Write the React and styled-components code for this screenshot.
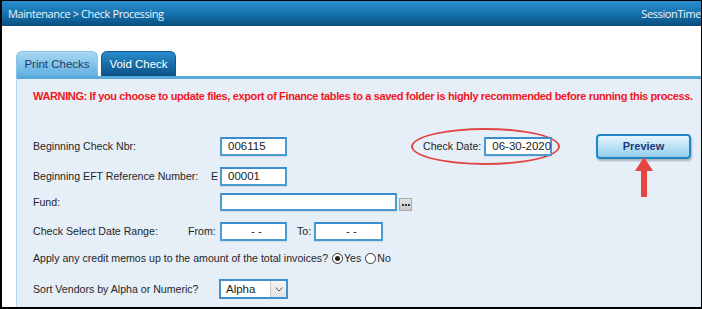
import React from "react";
import styled, { createGlobalStyle } from "styled-components";

const GlobalStyle = createGlobalStyle`
  html, body {
    margin: 0;
    padding: 0;
    background: #000;
  }
  body {
    font-family: "Liberation Sans", Arial, sans-serif;
  }
`;

const Frame = styled.div`
  width: 699px;
  height: 306px;
  border-top: 1px solid #000;
  border-left: 2px solid #000;
  border-right: 1px solid #000;
  border-bottom: 2px solid #000;
  background: #fff;
  overflow: hidden;
  display: flex;
  flex-direction: column;
`;

const Header = styled.div`
  height: 25px;
  flex: none;
  background: linear-gradient(#2a8fcf, #1470aa 55%, #0b4d7e);
  color: #eef4fa;
  font-family: "Open Sans", sans-serif;
  font-size: 11px;
  letter-spacing: -0.4px;
  display: flex;
  align-items: center;
  justify-content: space-between;
  padding: 0 0 0 6px;
  white-space: nowrap;
`;

const SessionTime = styled.span`
  margin-right: 0;
`;

const TabBar = styled.div`
  display: flex;
  gap: 3px;
  padding: 25px 0 0 14px;
  height: 25px;
`;

const Tab = styled.div`
  height: 25px;
  box-sizing: border-box;
  width: ${(p) => p.$w}px;
  border-radius: 6px 6px 0 0;
  display: flex;
  align-items: center;
  justify-content: center;
  font-size: 11.5px;
  color: ${(p) => (p.$active ? "#1d3e6c" : "#fff")};
  background: ${(p) =>
    p.$active
      ? "linear-gradient(#a9d8f3, #7cc0e8 60%, #62b0e0)"
      : "linear-gradient(#2b8dcc, #1569a3 60%, #0c5185)"};
  border: 1px solid ${(p) => (p.$active ? "#8cc4e6" : "#0f5a90")};
  border-bottom: none;
`;

const Panel = styled.div`
  flex: 1;
  margin-left: 14px;
  background: #e6eef8;
  border-top: 3px solid #5aaad9;
  border-left: 1px solid #b4d4ec;
  padding: 0 0 0 16px;
`;

const Warning = styled.div`
  color: #f2161e;
  font-weight: bold;
  font-size: 11px;
  letter-spacing: -0.37px;
  margin-top: 11px;
  white-space: nowrap;
`;

const Row = styled.div`
  display: flex;
  align-items: center;
  height: 22px;
  margin-top: ${(p) => p.$mt}px;
  font-size: 10.6px;
  color: #262626;
  white-space: nowrap;
`;

const Label = styled.span`
  box-sizing: border-box;
  width: ${(p) => p.$w}px;
  padding-left: ${(p) => p.$pl || 0}px;
  flex: none;
`;

const Field = styled.div`
  box-sizing: border-box;
  width: ${(p) => p.$w}px;
  height: ${(p) => p.$h || 19}px;
  border: 2px solid #4b9bd3;
  border-top-color: #3c8ccb;
  background: #fff;
  font-size: 11.5px;
  color: #1c1c1c;
  padding-left: 6px;
  display: flex;
  align-items: center;
  justify-content: ${(p) => (p.$center ? "center" : "flex-start")};
  flex: none;
  box-shadow: 0 1px 1px rgba(0, 0, 0, 0.08);
`;

const Ellipsis = styled.div`
  box-sizing: border-box;
  width: 13px;
  height: 13px;
  margin-left: 2px;
  background: linear-gradient(#e4e4e4, #c8c8c8);
  border: 1px solid #a8a8a8;
  display: flex;
  align-items: center;
  justify-content: center;
  gap: 1px;
  align-self: flex-end;
  margin-bottom: 2px;
`;

const Dot = styled.span`
  width: 2px;
  height: 2px;
  background: #333;
`;

const Oval = styled.div`
  margin-left: 124px;
  width: 149px;
  height: 37px;
  box-sizing: border-box;
  border: 2px solid #e14646;
  border-radius: 50%;
  display: flex;
  align-items: center;
  padding-left: 10px;
  gap: 3px;
  flex: none;
`;

const ButtonWrap = styled.div`
  position: relative;
  margin-left: 36px;
  flex: none;
`;

const PreviewButton = styled.div`
  width: 95px;
  height: 25px;
  box-sizing: border-box;
  border: 2px solid #1f87c6;
  border-radius: 4px;
  background: linear-gradient(#e6f4fd, #b8e0f6 55%, #95cdee);
  color: #1a3b78;
  font-weight: bold;
  font-size: 11px;
  display: flex;
  align-items: center;
  justify-content: center;
  box-shadow: 1px 2px 2px rgba(0, 0, 0, 0.25);
`;

const Arrow = styled.svg`
  position: absolute;
  left: 38px;
  top: 22px;
`;

const Radio = styled.span`
  display: inline-block;
  box-sizing: border-box;
  width: 11px;
  height: 11px;
  border-radius: 50%;
  border: 1px solid #333;
  background: #fff;
  margin: 0 1px 0 4px;
  position: relative;
  &::after {
    content: "";
    display: ${(p) => (p.$on ? "block" : "none")};
    position: absolute;
    left: 2px;
    top: 2px;
    width: 5px;
    height: 5px;
    border-radius: 50%;
    background: #222;
  }
`;

const Select = styled.div`
  box-sizing: border-box;
  width: 69px;
  height: 20px;
  border: 2px solid #3f92cf;
  background: #fff;
  display: flex;
  align-items: stretch;
  font-size: 11.5px;
  color: #1c1c1c;
`;

const SelectText = styled.span`
  flex: 1;
  display: flex;
  align-items: center;
  padding-left: 5px;
`;

const SelectArrow = styled.span`
  width: 15px;
  border-left: 1px solid #c8c8c8;
  background: linear-gradient(#f4f4f4, #e2e2e2);
  display: flex;
  align-items: center;
  justify-content: center;
`;

export default function App() {
  return (
    <>
      <GlobalStyle />
      <Frame>
        <Header>
          <span>Maintenance &gt; Check Processing</span>
          <SessionTime>SessionTime</SessionTime>
        </Header>
        <TabBar>
          <Tab $active $w={82}>Print Checks</Tab>
          <Tab $w={75}>Void Check</Tab>
        </TabBar>
        <Panel>
          <Warning>
            WARNING: If you choose to update files, export of Finance tables to a saved folder is highly recommended before running this process.
          </Warning>
          <Row $mt={33}>
            <Label $w={187}>Beginning Check Nbr:</Label>
            <Field $w={67}>006115</Field>
            <Oval>
              <span>Check Date:</span>
              <Field $w={68}>06-30-2020</Field>
            </Oval>
            <ButtonWrap>
              <PreviewButton>Preview</PreviewButton>
              <Arrow width="20" height="44" viewBox="0 0 20 44">
                <polygon points="10,1 19,15 13,15 13,41 7,41 7,15 1,15" fill="#e64444" />
              </Arrow>
            </ButtonWrap>
          </Row>
          <Row $mt={8}>
            <Label $w={178}>Beginning EFT Reference Number:</Label>
            <Label $w={9}>E</Label>
            <Field $w={67}>00001</Field>
          </Row>
          <Row $mt={4}>
            <Label $w={187}>Fund:</Label>
            <Field $w={177} $h={18} />
            <Ellipsis>
              <Dot />
              <Dot />
              <Dot />
            </Ellipsis>
          </Row>
          <Row $mt={7}>
            <Label $w={155}>Check Select Date Range:</Label>
            <Label $w={32}>From:</Label>
            <Field $w={67} $center>- -</Field>
            <Label $w={27} $pl={10}>To:</Label>
            <Field $w={69} $center>- -</Field>
          </Row>
          <Row $mt={5}>
            <span>Apply any credit memos up to the amount of the total invoices?</span>
            <Radio $on />
            <span>Yes</span>
            <Radio />
            <span>No</span>
          </Row>
          <Row $mt={9}>
            <Label $w={186}>Sort Vendors by Alpha or Numeric?</Label>
            <Select>
              <SelectText>Alpha</SelectText>
              <SelectArrow>
                <svg width="8" height="5" viewBox="0 0 8 5">
                  <polyline points="0.5,0.5 4,4 7.5,0.5" fill="none" stroke="#555" strokeWidth="1" />
                </svg>
              </SelectArrow>
            </Select>
          </Row>
        </Panel>
      </Frame>
    </>
  );
}
